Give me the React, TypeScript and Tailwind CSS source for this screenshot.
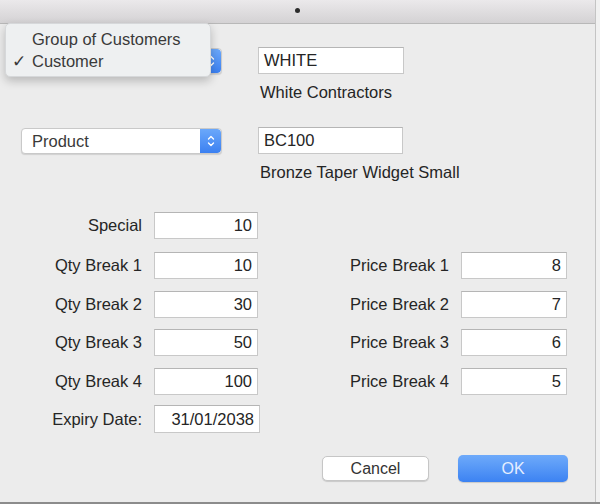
import React from "react";

const Stepper = () => (
  <div className="w-[21px] h-full rounded-r-[4px] bg-gradient-to-b from-[#6ba8fa] to-[#3b80f1] flex items-center justify-center">
    <svg width="8" height="14" viewBox="0 0 8 14" fill="none" stroke="#ffffff" strokeWidth="1.4" strokeLinecap="round" strokeLinejoin="round">
      <path d="M1.5 5 L4 2.5 L6.5 5" />
      <path d="M1.5 9 L4 11.5 L6.5 9" />
    </svg>
  </div>
);

function Select({ value }: { value: string }) {
  return (
    <div className="w-[201px] h-[26px] flex bg-white rounded-[4px] border border-[#c9c9c9] shadow-[0_1px_1px_rgba(0,0,0,0.12)] overflow-hidden">
      <div className="flex-1 flex items-center pl-[10px] text-[16.5px] text-[#3a3a3a]">{value}</div>
      <Stepper />
    </div>
  );
}

function Field({ value, className = "", align = "right" }: { value: string; className?: string; align?: "left" | "right" }) {
  return (
    <div
      className={`h-[27px] bg-white border border-[#c8c8c8] border-t-[#b5b5b5] flex items-center text-[16.5px] text-[#252525] ${
        align === "right" ? "justify-end pr-[5px]" : "pl-[5px]"
      } ${className}`}
    >
      {value}
    </div>
  );
}

const Label = ({ text }: { text: string }) => (
  <div className="h-[27px] flex items-center justify-end text-[16.5px] text-[#252525] whitespace-nowrap">{text}</div>
);

const rows = [
  { qty: "Qty Break 1", q: "10", price: "Price Break 1", p: "8" },
  { qty: "Qty Break 2", q: "30", price: "Price Break 2", p: "7" },
  { qty: "Qty Break 3", q: "50", price: "Price Break 3", p: "6" },
  { qty: "Qty Break 4", q: "100", price: "Price Break 4", p: "5" },
];

export default function App() {
  return (
    <div className="relative w-[600px] h-[504px] bg-[#f1f1f1] border-b-2 border-[#8c8c8c] font-['Liberation_Sans',Arial,sans-serif] overflow-hidden">
      <div className="w-[596px] h-full bg-[#ececec] border-r border-[#c4c4c4] flex flex-col">
        <div className="h-[24px] shrink-0 bg-gradient-to-b from-[#ebe9eb] to-[#d4d2d4] border-b border-[#b8b8b8] flex justify-center">
          <div className="w-[5px] h-[5px] rounded-full bg-[#2c2c2c] mt-[8px]" />
        </div>

        <div className="pl-[21px] pt-[23px] flex flex-col">
          <div className="flex items-start">
            <div className="mt-[1px]">
              <Select value="Customer" />
            </div>
            <div className="ml-[36px] flex flex-col">
              <Field value="WHITE" align="left" className="w-[146px]" />
              <div className="mt-[8px] ml-[2px] leading-5 text-[16.5px] text-[#252525]">White Contractors</div>
            </div>
          </div>

          <div className="flex items-start mt-[25px]">
            <div className="mt-[1px]">
              <Select value="Product" />
            </div>
            <div className="ml-[36px] flex flex-col">
              <Field value="BC100" align="left" className="w-[145px]" />
              <div className="mt-[8px] ml-[2px] leading-5 text-[16.5px] text-[#252525]">Bronze Taper Widget Small</div>
            </div>
          </div>

          <div className="mt-[30px] flex flex-col gap-[11.5px]">
            <div className="grid grid-cols-[121px_104px] gap-x-[12px] mb-[1.5px]">
              <Label text="Special" />
              <Field value="10" />
            </div>
            {rows.map((r) => (
              <div key={r.qty} className="grid grid-cols-[121px_104px_179px_106px] gap-x-[12px]">
                <Label text={r.qty} />
                <Field value={r.q} />
                <Label text={r.price} />
                <Field value={r.p} />
              </div>
            ))}
            <div className="grid grid-cols-[121px_106px] gap-x-[12px] -mt-[1px]">
              <div className="h-[28px] flex items-center justify-end text-[16.5px] text-[#252525]">Expiry Date:</div>
              <Field value="31/01/2038" className="!h-[28px]" />
            </div>
          </div>

          <div className="flex items-center mt-[22px] ml-[301px] gap-[29px]">
            <button className="w-[107px] h-[25px] bg-white rounded-[5px] border border-[#c6c6c6] shadow-[0_1px_1px_rgba(0,0,0,0.15)] text-[16px] text-[#333]">
              Cancel
            </button>
            <button className="w-[110px] h-[27px] rounded-[5px] bg-gradient-to-b from-[#6eaafa] to-[#3c82f2] shadow-[0_1px_1px_rgba(0,0,0,0.15)] text-[16px] text-[#e4eeff]">
              OK
            </button>
          </div>
        </div>
      </div>

      <div className="absolute left-[5px] top-[23px] w-[206px] h-[54px] rounded-[5px] bg-[#eef0f1] border border-[#d6d8da] shadow-[0_4px_10px_rgba(0,0,0,0.22)] pt-[4px]">
        <div className="h-[22px] flex items-center pl-[26px] text-[16.5px] text-[#3a3a3a]">Group of Customers</div>
        <div className="h-[22px] flex items-center text-[16.5px] text-[#3a3a3a]">
          <span className="w-[26px] pl-[6px] font-['DejaVu_Sans',sans-serif] font-bold text-[17px] leading-none">✓</span>
          Customer
        </div>
      </div>
    </div>
  );
}
